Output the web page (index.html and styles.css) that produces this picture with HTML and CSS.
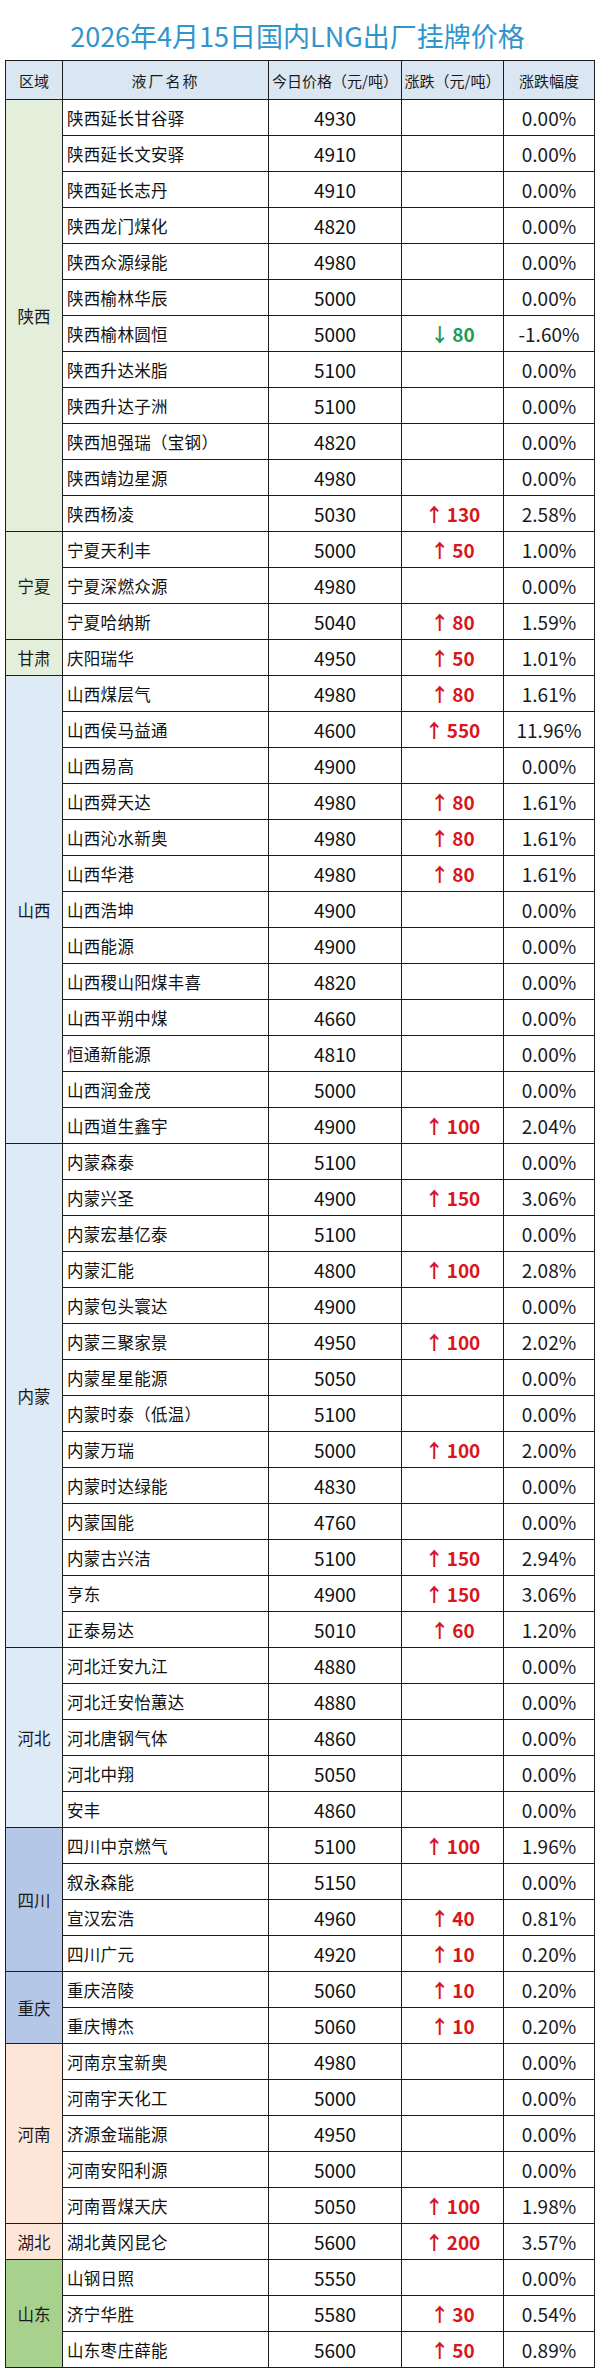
FILE: index.html
```html
<!DOCTYPE html>
<html lang="zh-CN">
<head>
<meta charset="utf-8">
<title>2026年4月15日国内LNG出厂挂牌价格</title>
<link rel="stylesheet" href="styles.css">
</head>
<body>
<div class="title">2026年4月15日国内LNG出厂挂牌价格</div>
<table class="price">
<colgroup>
<col class="c-region"><col class="c-name"><col class="c-price"><col class="c-chg"><col class="c-pct">
</colgroup>
<thead>
<tr><th>区域</th><th class="h-name">液厂名称</th><th>今日价格（元/吨）</th><th>涨跌（元/吨）</th><th>涨跌幅度</th></tr>
</thead>
<tbody>
<tr><td class="region g1" rowspan="12">陕西</td><td class="name">陕西延长甘谷驿</td><td class="num">4930</td><td class="chg"></td><td class="pct">0.00%</td></tr>
<tr><td class="name">陕西延长文安驿</td><td class="num">4910</td><td class="chg"></td><td class="pct">0.00%</td></tr>
<tr><td class="name">陕西延长志丹</td><td class="num">4910</td><td class="chg"></td><td class="pct">0.00%</td></tr>
<tr><td class="name">陕西龙门煤化</td><td class="num">4820</td><td class="chg"></td><td class="pct">0.00%</td></tr>
<tr><td class="name">陕西众源绿能</td><td class="num">4980</td><td class="chg"></td><td class="pct">0.00%</td></tr>
<tr><td class="name">陕西榆林华辰</td><td class="num">5000</td><td class="chg"></td><td class="pct">0.00%</td></tr>
<tr><td class="name">陕西榆林圆恒</td><td class="num">5000</td><td class="chg down"><span class="arr">↓</span>80</td><td class="pct">-1.60%</td></tr>
<tr><td class="name">陕西升达米脂</td><td class="num">5100</td><td class="chg"></td><td class="pct">0.00%</td></tr>
<tr><td class="name">陕西升达子洲</td><td class="num">5100</td><td class="chg"></td><td class="pct">0.00%</td></tr>
<tr><td class="name">陕西旭强瑞（宝钢）</td><td class="num">4820</td><td class="chg"></td><td class="pct">0.00%</td></tr>
<tr><td class="name">陕西靖边星源</td><td class="num">4980</td><td class="chg"></td><td class="pct">0.00%</td></tr>
<tr><td class="name">陕西杨凌</td><td class="num">5030</td><td class="chg up"><span class="arr">↑</span>130</td><td class="pct">2.58%</td></tr>

<tr><td class="region g1" rowspan="3">宁夏</td><td class="name">宁夏天利丰</td><td class="num">5000</td><td class="chg up"><span class="arr">↑</span>50</td><td class="pct">1.00%</td></tr>
<tr><td class="name">宁夏深燃众源</td><td class="num">4980</td><td class="chg"></td><td class="pct">0.00%</td></tr>
<tr><td class="name">宁夏哈纳斯</td><td class="num">5040</td><td class="chg up"><span class="arr">↑</span>80</td><td class="pct">1.59%</td></tr>

<tr><td class="region g1">甘肃</td><td class="name">庆阳瑞华</td><td class="num">4950</td><td class="chg up"><span class="arr">↑</span>50</td><td class="pct">1.01%</td></tr>

<tr><td class="region b1" rowspan="13">山西</td><td class="name">山西煤层气</td><td class="num">4980</td><td class="chg up"><span class="arr">↑</span>80</td><td class="pct">1.61%</td></tr>
<tr><td class="name">山西侯马益通</td><td class="num">4600</td><td class="chg up"><span class="arr">↑</span>550</td><td class="pct">11.96%</td></tr>
<tr><td class="name">山西易高</td><td class="num">4900</td><td class="chg"></td><td class="pct">0.00%</td></tr>
<tr><td class="name">山西舜天达</td><td class="num">4980</td><td class="chg up"><span class="arr">↑</span>80</td><td class="pct">1.61%</td></tr>
<tr><td class="name">山西沁水新奥</td><td class="num">4980</td><td class="chg up"><span class="arr">↑</span>80</td><td class="pct">1.61%</td></tr>
<tr><td class="name">山西华港</td><td class="num">4980</td><td class="chg up"><span class="arr">↑</span>80</td><td class="pct">1.61%</td></tr>
<tr><td class="name">山西浩坤</td><td class="num">4900</td><td class="chg"></td><td class="pct">0.00%</td></tr>
<tr><td class="name">山西能源</td><td class="num">4900</td><td class="chg"></td><td class="pct">0.00%</td></tr>
<tr><td class="name">山西稷山阳煤丰喜</td><td class="num">4820</td><td class="chg"></td><td class="pct">0.00%</td></tr>
<tr><td class="name">山西平朔中煤</td><td class="num">4660</td><td class="chg"></td><td class="pct">0.00%</td></tr>
<tr><td class="name">恒通新能源</td><td class="num">4810</td><td class="chg"></td><td class="pct">0.00%</td></tr>
<tr><td class="name">山西润金茂</td><td class="num">5000</td><td class="chg"></td><td class="pct">0.00%</td></tr>
<tr><td class="name">山西道生鑫宇</td><td class="num">4900</td><td class="chg up"><span class="arr">↑</span>100</td><td class="pct">2.04%</td></tr>

<tr><td class="region b1" rowspan="14">内蒙</td><td class="name">内蒙森泰</td><td class="num">5100</td><td class="chg"></td><td class="pct">0.00%</td></tr>
<tr><td class="name">内蒙兴圣</td><td class="num">4900</td><td class="chg up"><span class="arr">↑</span>150</td><td class="pct">3.06%</td></tr>
<tr><td class="name">内蒙宏基亿泰</td><td class="num">5100</td><td class="chg"></td><td class="pct">0.00%</td></tr>
<tr><td class="name">内蒙汇能</td><td class="num">4800</td><td class="chg up"><span class="arr">↑</span>100</td><td class="pct">2.08%</td></tr>
<tr><td class="name">内蒙包头寰达</td><td class="num">4900</td><td class="chg"></td><td class="pct">0.00%</td></tr>
<tr><td class="name">内蒙三聚家景</td><td class="num">4950</td><td class="chg up"><span class="arr">↑</span>100</td><td class="pct">2.02%</td></tr>
<tr><td class="name">内蒙星星能源</td><td class="num">5050</td><td class="chg"></td><td class="pct">0.00%</td></tr>
<tr><td class="name">内蒙时泰（低温）</td><td class="num">5100</td><td class="chg"></td><td class="pct">0.00%</td></tr>
<tr><td class="name">内蒙万瑞</td><td class="num">5000</td><td class="chg up"><span class="arr">↑</span>100</td><td class="pct">2.00%</td></tr>
<tr><td class="name">内蒙时达绿能</td><td class="num">4830</td><td class="chg"></td><td class="pct">0.00%</td></tr>
<tr><td class="name">内蒙国能</td><td class="num">4760</td><td class="chg"></td><td class="pct">0.00%</td></tr>
<tr><td class="name">内蒙古兴洁</td><td class="num">5100</td><td class="chg up"><span class="arr">↑</span>150</td><td class="pct">2.94%</td></tr>
<tr><td class="name">亨东</td><td class="num">4900</td><td class="chg up"><span class="arr">↑</span>150</td><td class="pct">3.06%</td></tr>
<tr><td class="name">正泰易达</td><td class="num">5010</td><td class="chg up"><span class="arr">↑</span>60</td><td class="pct">1.20%</td></tr>

<tr><td class="region b1" rowspan="5">河北</td><td class="name">河北迁安九江</td><td class="num">4880</td><td class="chg"></td><td class="pct">0.00%</td></tr>
<tr><td class="name">河北迁安怡蕙达</td><td class="num">4880</td><td class="chg"></td><td class="pct">0.00%</td></tr>
<tr><td class="name">河北唐钢气体</td><td class="num">4860</td><td class="chg"></td><td class="pct">0.00%</td></tr>
<tr><td class="name">河北中翔</td><td class="num">5050</td><td class="chg"></td><td class="pct">0.00%</td></tr>
<tr><td class="name">安丰</td><td class="num">4860</td><td class="chg"></td><td class="pct">0.00%</td></tr>

<tr><td class="region b2" rowspan="4">四川</td><td class="name">四川中京燃气</td><td class="num">5100</td><td class="chg up"><span class="arr">↑</span>100</td><td class="pct">1.96%</td></tr>
<tr><td class="name">叙永森能</td><td class="num">5150</td><td class="chg"></td><td class="pct">0.00%</td></tr>
<tr><td class="name">宣汉宏浩</td><td class="num">4960</td><td class="chg up"><span class="arr">↑</span>40</td><td class="pct">0.81%</td></tr>
<tr><td class="name">四川广元</td><td class="num">4920</td><td class="chg up"><span class="arr">↑</span>10</td><td class="pct">0.20%</td></tr>

<tr><td class="region b2" rowspan="2">重庆</td><td class="name">重庆涪陵</td><td class="num">5060</td><td class="chg up"><span class="arr">↑</span>10</td><td class="pct">0.20%</td></tr>
<tr><td class="name">重庆博杰</td><td class="num">5060</td><td class="chg up"><span class="arr">↑</span>10</td><td class="pct">0.20%</td></tr>

<tr><td class="region o1" rowspan="5">河南</td><td class="name">河南京宝新奥</td><td class="num">4980</td><td class="chg"></td><td class="pct">0.00%</td></tr>
<tr><td class="name">河南宇天化工</td><td class="num">5000</td><td class="chg"></td><td class="pct">0.00%</td></tr>
<tr><td class="name">济源金瑞能源</td><td class="num">4950</td><td class="chg"></td><td class="pct">0.00%</td></tr>
<tr><td class="name">河南安阳利源</td><td class="num">5000</td><td class="chg"></td><td class="pct">0.00%</td></tr>
<tr><td class="name">河南晋煤天庆</td><td class="num">5050</td><td class="chg up"><span class="arr">↑</span>100</td><td class="pct">1.98%</td></tr>

<tr><td class="region o1">湖北</td><td class="name">湖北黄冈昆仑</td><td class="num">5600</td><td class="chg up"><span class="arr">↑</span>200</td><td class="pct">3.57%</td></tr>

<tr><td class="region g2" rowspan="3">山东</td><td class="name">山钢日照</td><td class="num">5550</td><td class="chg"></td><td class="pct">0.00%</td></tr>
<tr><td class="name">济宁华胜</td><td class="num">5580</td><td class="chg up"><span class="arr">↑</span>30</td><td class="pct">0.54%</td></tr>
<tr><td class="name">山东枣庄薛能</td><td class="num">5600</td><td class="chg up"><span class="arr">↑</span>50</td><td class="pct">0.89%</td></tr>
</tbody>
</table>
</body>
</html>
```

FILE: styles.css
```css
html, body {
  margin: 0;
  padding: 0;
  background: #ffffff;
}

body {
  font-family: "Noto Sans CJK SC", "Noto Sans", sans-serif;
  color: #111111;
}

.title {
  height: 60px;
  display: flex;
  align-items: center;
  justify-content: center;
  font-size: 27px;
  color: #3095cd;
  box-sizing: border-box;
  padding-top: 10px;
}

.price {
  border-collapse: collapse;
  table-layout: fixed;
  width: 589px;
  margin-left: 5px;
}

.c-region { width: 57px; }
.c-name { width: 206px; }
.c-price { width: 133px; }
.c-chg { width: 102px; }
.c-pct { width: 91px; }

.price th,
.price td {
  border: 1px solid #1c1c1c;
  padding: 0;
  white-space: nowrap;
  overflow: hidden;
}

.price th {
  height: 38px;
  background: #dae6f2;
  font-weight: normal;
  font-size: 15px;
  color: #1a1a1a;
  text-align: center;
}

.price th.h-name {
  letter-spacing: 2px;
}

.price td {
  height: 35px;
  font-size: 16.5px;
}

.region {
  text-align: center;
  vertical-align: middle;
  color: #1a1a1a;
}

.g1 { background: #e3efda; }
.b1 { background: #deebf7; }
.b2 { background: #b5c7e6; }
.o1 { background: #fde6d8; }
.g2 { background: #a9d18e; }

.price td.name {
  text-align: left;
  padding-left: 4px;
  letter-spacing: 0.3px;
  color: #111111;
}

.price td.num {
  text-align: center;
  font-size: 19px;
  color: #111111;
}

.price td.chg {
  text-align: center;
  font-weight: bold;
  font-size: 19px;
}

.arr {
  margin-right: 3px;
}

.chg.up { color: #d9161c; }
.chg.down { color: #1f9a5a; }

.price td.pct {
  text-align: center;
  font-size: 19px;
  color: #1a1a1a;
}
```
